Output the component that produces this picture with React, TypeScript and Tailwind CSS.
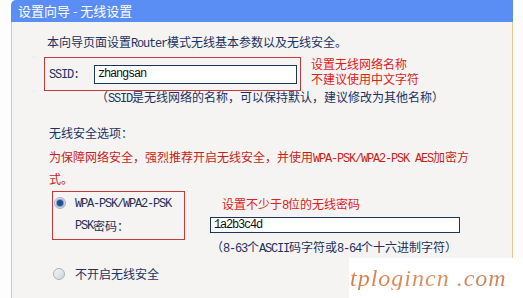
const cjk = "font-['Noto_Sans_CJK_SC','Liberation_Sans',sans-serif]"

// latin runs look like SimSun's half-width serif glyphs
function L({ children }: { children: React.ReactNode }) {
  return (
    <span className="font-['Liberation_Mono',monospace] text-[12px] tracking-[-1.2px]">
      {children}
    </span>
  )
}

function Radio({ checked = false }: { checked?: boolean }) {
  return (
    <span className="flex h-[12px] w-[12px] shrink-0 items-center justify-center rounded-full border border-[#a9b1bb] bg-gradient-to-br from-[#f4f6f8] to-[#cfd5dc]">
      {checked && <span className="h-[6px] w-[6px] rounded-full bg-[#1f4f8f] shadow-[0_0_1px_1px_#6a93c8]" />}
    </span>
  )
}

export default function App() {
  return (
    <div className={`relative flex h-[298px] w-[523px] overflow-hidden bg-[#fdfdfd] text-[12px] text-[#1c3262] ${cjk}`}>
      <div className="w-[11px] shrink-0" />
      <div className="flex w-[502px] flex-col">
        <div className="flex h-[22px] items-center rounded-tl-[5px] bg-[#5b8ef4] pl-[7px] text-[13px] text-white">
          设置向导 - 无线设置
        </div>
        <div className="flex flex-1 flex-col border-x border-[#ecc48c] bg-[#f5f4f2] pl-[32px]">
          <div className="ml-[3px] mt-[10px] h-[20px] leading-[20px]">
            本向导页面设置<L>Router</L>模式无线基本参数以及无线安全。
          </div>

          <div className="mt-[5px] flex items-start">
            <div className="flex h-[34px] w-[257px] items-center border border-[#c23a3a] pl-[4px]">
              <span className="w-[45px]">
                <L>SSID:</L>
              </span>
              <div className="flex h-[19px] w-[203px] items-center border border-[#1d3559] bg-white pl-[3px] text-[#111]">
                <L>zhangsan</L>
              </div>
            </div>
            <div className="-mt-[1px] ml-[10px] flex flex-col text-[12px] leading-[15px] text-[#dd2020]">
              <div>设置无线网络名称</div>
              <div>不建议使用中文字符</div>
            </div>
          </div>

          <div className="ml-[52px] h-[12px] whitespace-nowrap leading-[12px]">
            （<L>SSID</L>是无线网络的名称，可以保持默认，建议修改为其他名称）
          </div>

          <div className="ml-[5px] mt-[20px] h-[20px] leading-[20px]">无线安全选项：</div>
          <div className="ml-[5px] mt-[4px] whitespace-nowrap leading-[19px] text-[#c81d1d]">
            <div>
              为保障网络安全，强烈推荐开启无线安全，并使用<L>WPA-PSK/WPA2-PSK AES</L>加密方
            </div>
            <div>式。</div>
          </div>

          <div className="mt-[3px] flex items-start">
            <div className="ml-[8px] flex h-[49px] w-[133px] flex-col border border-[#c23a3a] pl-[1px] pt-[2px]">
              <div className="flex h-[18px] items-center">
                <Radio checked />
                <span className="ml-[9px]">
                  <L>WPA-PSK/WPA2-PSK</L>
                </span>
              </div>
              <div className="mt-[5px] flex h-[18px] items-center pl-[21px]">
                <L>PSK</L>密码：
              </div>
            </div>
            <div className="ml-[25px] flex flex-col">
              <div className="ml-[12px] mt-[6px] h-[14px] leading-[14px] text-[#dd2020]">
                设置不少于<L>8</L>位的无线密码
              </div>
              <div className="mt-[6px] flex h-[16px] w-[250px] items-center border border-[#1d3559] bg-white pl-[3px] text-[#111]">
                <L>1a2b3c4d</L>
              </div>
              <div className="ml-[1px] mt-[7px] h-[14px] whitespace-nowrap leading-[14px]">
                （<L>8-63</L>个<L>ASCII</L>码字符或<L>8-64</L>个十六进制字符）
              </div>
            </div>
          </div>

          <div className="ml-[9px] mt-[11px] flex h-[18px] items-center">
            <Radio />
            <span className="ml-[10px]">不开启无线安全</span>
          </div>
        </div>
      </div>
      <div className="absolute bottom-0 left-[349px] right-0 top-[258px] flex items-center bg-white pl-[1px]">
        <span className="bg-gradient-to-r from-[#e07a45] via-[#d99060] to-[#c9825a] bg-clip-text font-['Liberation_Serif',serif] text-[24px] italic leading-none tracking-[1px] text-transparent">
          tplogincn .com
        </span>
      </div>
    </div>
  )
}
